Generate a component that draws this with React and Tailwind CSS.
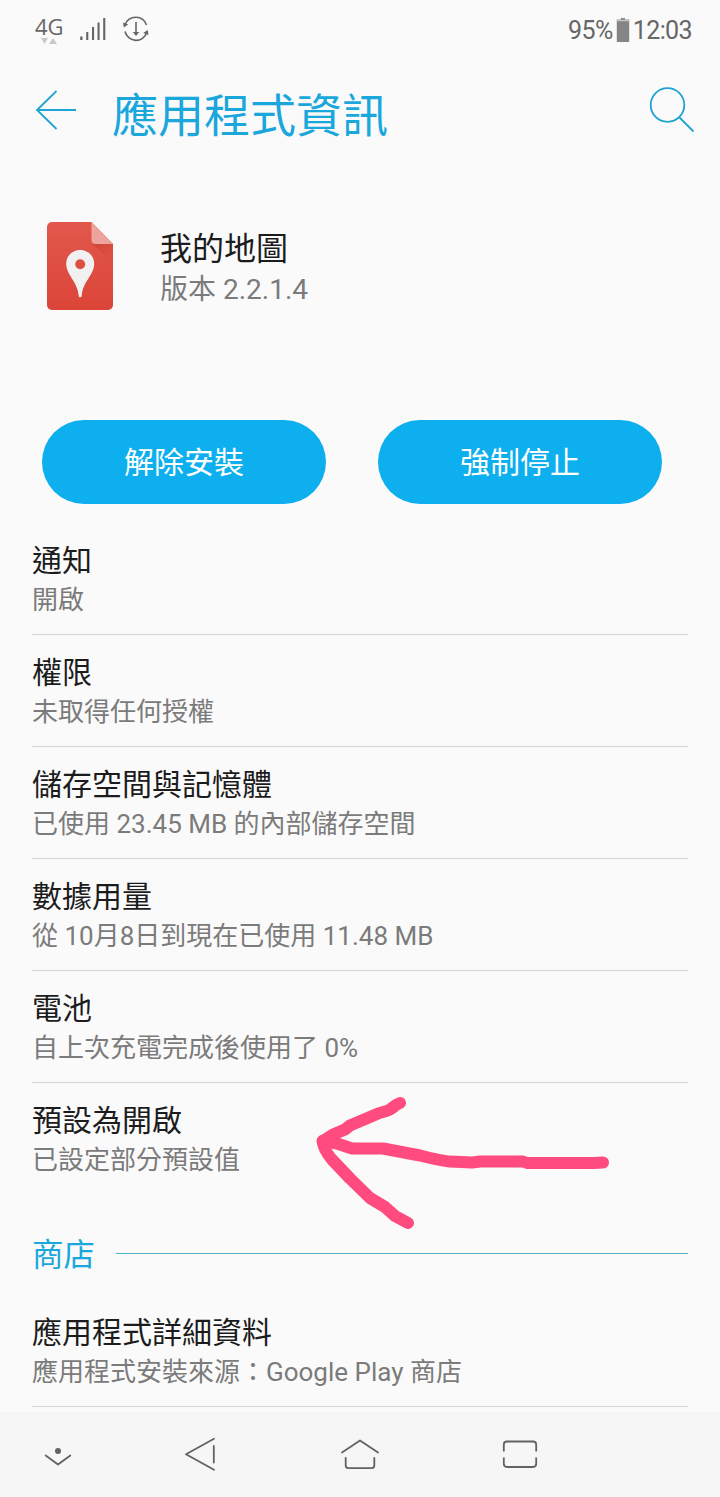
import React from "react";

const settings = [
  { title: "通知", detail: "開啟" },
  { title: "權限", detail: "未取得任何授權" },
  { title: "儲存空間與記憶體", detail: "已使用 23.45 MB 的內部儲存空間" },
  { title: "數據用量", detail: "從 10月8日到現在已使用 11.48 MB" },
  { title: "電池", detail: "自上次充電完成後使用了 0%" },
  { title: "預設為開啟", detail: "已設定部分預設值", marked: true },
];

function StatusBar() {
  return (
    <div className="flex h-[60px] shrink-0 items-center justify-between pl-[35px] pr-[28px] text-[#666]">
      <div className="flex items-center">
        <div className="h-[32px] w-[29px]">
          <div className="font-['Open_Sans',sans-serif] text-[22px] leading-[24px]">4G</div>
          <svg className="ml-[6px]" width="17" height="6" viewBox="0 0 17 6" fill="#c8c8c8">
            <path d="M0 0h7L3.5 6zM8 6h8L12 0z" />
          </svg>
        </div>
        <svg className="-mt-[3px] ml-[16px]" width="26" height="24" viewBox="0 0 26 24" fill="#666">
          <path d="M.2 19.500h2.300V23H.2zM6.200 15h2.100v8H6.200zM12 10h2.100v13H12zM17.500 5.500h2.100V23h-2.100zM23.200 1h2.100v22h-2.100z" />
        </svg>
        <svg className="-mt-[2px] ml-[17px]" width="26" height="26" viewBox="0 0 26 26" fill="none" stroke="#666" strokeWidth="1.6">
          <path d="M2.2 8.5A11.3 11.3 0 0 1 23.5 9M23.8 16.5A11.3 11.3 0 0 1 2 15.5M13 6v13" />
          <path d="M0 6.500.8 11.500l4.400-3zM25.500 19l-.8-5-4.500 3zM9.800 16h6.4L13 20z" fill="#666" stroke="none" />
        </svg>
      </div>
      <div className="flex items-center pt-[2px] text-[25px] leading-[30px] tracking-[-0.6px]">
        <span>95%</span>
        <svg className="-mt-[3px] ml-[3px] mr-[3px]" width="14" height="26" viewBox="0 0 14 26">
          <path d="M5 1h4v1.5h4.2V25H.8V2.500H5z" fill="#858585" />
          <path d="M.8 3.500h12.400" stroke="#c4c4c4" strokeWidth="1.500" />
        </svg>
        <span>12:03</span>
      </div>
    </div>
  );
}

function Header() {
  return (
    <header className="flex h-[110px] shrink-0 items-start pl-[35px] pr-[25px] pt-[26px] text-[#1aa7dc]">
      <svg className="mt-[3px]" width="42" height="42" viewBox="0 0 42 42" fill="none" stroke="#1fa3d3" strokeWidth="1.800">
        <path d="M21.500 2 2 21l19.500 19M2 21h39" />
      </svg>
      <h1 className="ml-[35px] mt-px text-[46px] font-normal leading-[58px]">應用程式資訊</h1>
      <svg className="ml-auto" width="46" height="48" viewBox="0 0 46 48" fill="none" stroke="#1fa3d3" strokeWidth="1.800">
        <circle cx="18.500" cy="19" r="16.800" />
        <path d="m30 31 14.500 14.500" />
      </svg>
    </header>
  );
}

function MapsLogo() {
  return (
    <svg width="67" height="89" viewBox="0 0 67 89">
      <defs>
        <linearGradient id="sheet" x1="0" y1="0" x2="0" y2="1">
          <stop offset="0" stopColor="#e1584c" />
          <stop offset="1" stopColor="#db4538" />
        </linearGradient>
        <linearGradient id="shade" x1="0" y1="0" x2="1" y2="1">
          <stop offset="0" stopColor="#b93429" stopOpacity=".55" />
          <stop offset="1" stopColor="#db4538" stopOpacity="0" />
        </linearGradient>
      </defs>
      <path d="M5 0h39.500L66 22v61a5 5 0 0 1-5 5H5a5 5 0 0 1-5-5V5a5 5 0 0 1 5-5z" fill="url(#sheet)" />
      <path d="m46 22 20 20V22z" fill="url(#shade)" />
      <path d="M44.500 0v18a4 4 0 0 0 4 4H66z" fill="#eda49d" />
      <path
        fillRule="evenodd"
        d="M33.200 28c-8 0-14 6-14 13.800 0 11 11.500 18 12.500 32 .1 2 2.900 2 3 0 1-14 12.500-21 12.500-32 0-7.800-6-13.800-14-13.800zm0 9.300a5 5 0 1 1 0 10 5 5 0 0 1 0-10z"
        fill="#f1f1f1"
      />
    </svg>
  );
}

function PinkArrow() {
  return (
    <svg
      className="pointer-events-none absolute left-[268px] top-[-3px]"
      width="330"
      height="160"
      viewBox="0 0 330 160"
      fill="none"
      stroke="#ff4b7d"
      strokeWidth="12"
      strokeLinecap="round"
      strokeLinejoin="round"
    >
      <path d="M100 23c-4 1-7 5-11 7s-8 2-12 4L50 45.500l-5 4-12 5-10 6.500" />
      <path d="m23 61 14 2.500 15 5h31L120 75.500c12 3 22 5.500 30 6l22 1 8-1h43l4 1.500h67l9-.5" />
      <path d="M22.500 61c1 7 4 12 9 18L50 98.500 70 118l15 9 10 9 13 7" />
    </svg>
  );
}

function Row({ title, detail, marked, last }) {
  return (
    <div className={`relative flex h-[112px] flex-col pt-[17px] ${last ? "" : "border-b border-[#d4d6d6]"}`}>
      <div className="text-[30px] leading-[42px] text-[#1c1c1c]">{title}</div>
      <div className="whitespace-nowrap text-[26px] leading-[36px] text-[#7b7b7b]">{detail}</div>
      {marked && <PinkArrow />}
    </div>
  );
}

function NavBar() {
  return (
    <nav className="flex h-[85px] shrink-0 bg-[#f6f6f6] pl-[44px] pt-[24px]">
      <svg width="28" height="40" viewBox="0 0 28 40" fill="none" stroke="#626262" strokeWidth="1.800" strokeLinecap="round" strokeLinejoin="round">
        <circle cx="14" cy="15" r="3" fill="#626262" stroke="none" />
        <path d="m1.700 19.500 12.300 9 12.300-9" />
      </svg>
      <svg className="ml-[112px]" width="33" height="40" viewBox="0 0 33 40" fill="none" stroke="#626262" strokeWidth="1.800" strokeLinecap="round" strokeLinejoin="round">
        <path d="M30 2.800 2 18.300l28 15.500M29.800 10v16.500" />
      </svg>
      <svg className="ml-[123px]" width="40" height="40" viewBox="0 0 40 40" fill="none" stroke="#626262" strokeWidth="1.800" strokeLinecap="round" strokeLinejoin="round">
        <path d="M2 16.500 20 4.500l18 12M5.700 22v7.500q0 2.700 2.700 2.700h23.200q2.700 0 2.700-2.700V22" />
      </svg>
      <svg className="ml-[120px]" width="40" height="40" viewBox="0 0 40 40" fill="none" stroke="#626262" strokeWidth="1.800">
        <path d="M3.800 15.500V8.700q0-3.200 3.200-3.200h26q3.200 0 3.200 3.200v6.800M3.800 21.500v6.300q0 3.200 3.200 3.200h26q3.200 0 3.200-3.200v-6.300" />
      </svg>
    </nav>
  );
}

export default function App() {
  return (
    <div lang="zh-TW" className="flex h-[1497px] w-[720px] flex-col overflow-hidden bg-[#fafafa] font-[Roboto,'Noto_Sans_CJK_TC',sans-serif]">
      <StatusBar />
      <Header />

      {/* App summary */}
      <div className="flex h-[250px] shrink-0 items-start pl-[47px] pt-[52px]">
        <MapsLogo />
        <div className="ml-[46px] pt-[4px]">
          <div className="text-[32px] leading-[46px] text-[#1c1c1c]">我的地圖</div>
          <div className="text-[28px] leading-[36px] text-[#7b7b7b]">版本 2.2.1.4</div>
        </div>
      </div>

      <div className="flex shrink-0 gap-[52px] px-[42px]">
        <button className="h-[84px] w-[284px] rounded-full bg-[#0dafee] text-[30px] text-white">解除安裝</button>
        <button className="h-[84px] w-[284px] rounded-full bg-[#0dafee] text-[30px] text-white">強制停止</button>
      </div>

      {/* Settings list */}
      <main className="min-h-0 flex-1 px-[32px] pt-[19px]">
        {settings.map((item, i) => (
          <Row key={item.title} {...item} last={i === settings.length - 1} />
        ))}
        <div className="flex h-[100px] items-center pt-[17px]">
          <h2 className="w-[84px] pt-[4px] text-[31.500px] font-normal leading-[44px] text-[#1aa7dc]">商店</h2>
          <div className="h-px flex-1 bg-[#4fb4cb]" />
        </div>
        <Row title="應用程式詳細資料" detail="應用程式安裝來源：Google Play 商店" />
      </main>

      <NavBar />
    </div>
  );
}
